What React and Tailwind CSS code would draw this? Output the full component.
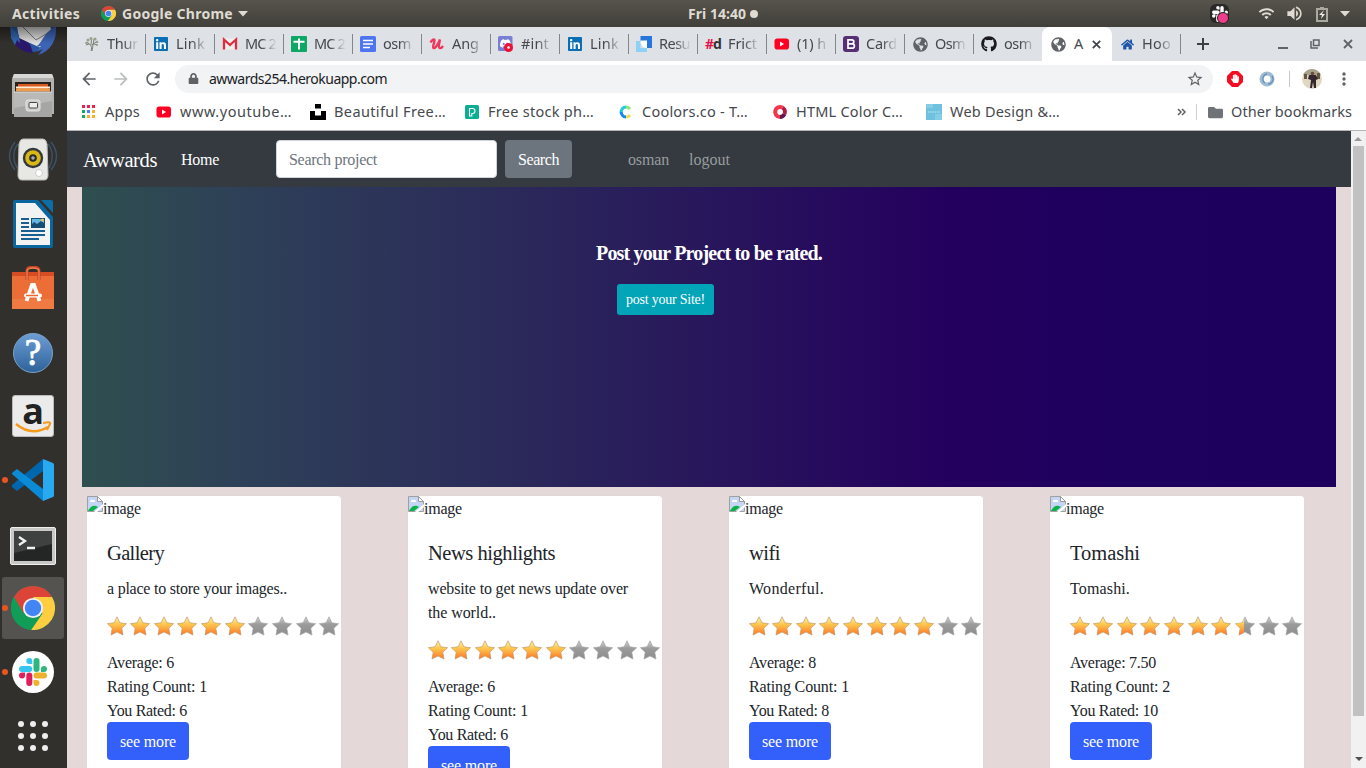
import React, { useLayoutEffect, useRef } from 'react';
import { FaLinkedin, FaGithub, FaGlobeAmericas, FaHome, FaFolder, FaHandPaper, FaLock, FaDiscord } from 'react-icons/fa';
import { MdRefresh, MdArrowBack, MdArrowForward, MdStarBorder, MdWifi, MdVolumeUp, MdMoreVert } from 'react-icons/md';

// Text that spreads its letters so that it fills a given width.
function Fit({ w, className = '', children }) {
  const ref = useRef(null);
  useLayoutEffect(() => {
    const el = ref.current;
    el.style.letterSpacing = '0px';
    const natural = el.getBoundingClientRect().width;
    el.style.letterSpacing = `${(w - natural) / String(children).length}px`;
  }, [w, children]);
  return (
    <span ref={ref} className={`inline-block whitespace-pre ${className}`}>
      {children}
    </span>
  );
}

function ChromeLogo({ size }) {
  return (
    <svg width={size} height={size} viewBox="0 0 48 48" className="shrink-0">
      <circle cx="24" cy="24" r="24" fill="#0f9d58" />
      <path d="M24 0a24 24 0 0 1 20.8 12H24A12 12 0 0 0 13.6 18L3.2 12A24 24 0 0 1 24 0z" fill="#db4437" />
      <path d="M3.2 12 13.6 30 24 12z" fill="#db4437" />
      <path d="M3.2 12 13.6 30 24 36 22 48A24 24 0 0 1 3.2 12z" fill="#0f9d58" />
      <path d="M24 12h20.8A24 24 0 0 1 22 48L34.4 30z" fill="#ffcd40" />
      <circle cx="24" cy="24" r="11" fill="#f1f1f1" />
      <circle cx="24" cy="24" r="9" fill="#4285f4" />
    </svg>
  );
}

function SlackMark({ size, mono }) {
  const c = mono ? ['#fff', '#fff', '#fff', '#fff'] : ['#36c5f0', '#2eb67d', '#ecb22e', '#e01e5a'];
  return (
    <svg width={size} height={size} viewBox="0 0 28 28">
      <path fill={c[0]} d="M10.3 0a3 3 0 1 0 0 6h3V3a3 3 0 0 0-3-3zM10.3 8H3a3 3 0 1 0 0 6h7.300a3 3 0 0 0 0-6z" />
      <path fill={c[1]} d="M28 11a3 3 0 1 0-6 0v3h3a3 3 0 0 0 3-3zM20.500 11V3a3 3 0 1 0-6 0v8a3 3 0 0 0 6 0z" />
      <path fill={c[2]} d="M17.500 28a3 3 0 1 0 0-6h-3v3a3 3 0 0 0 3 3zM17.500 20.500H25a3 3 0 0 0 0-6h-7.500a3 3 0 0 0 0 6z" />
      <path fill={c[3]} d="M0 17.500a3 3 0 1 0 6 0v-3H3a3 3 0 0 0-3 3zM7.300 17.500V25a3 3 0 1 0 6 0v-7.500a3 3 0 0 0-6 0z" />
    </svg>
  );
}

const YouTube = () => (
  <svg width="16" height="16" viewBox="0 0 16 16"><rect x="0.500" y="2.500" width="14.500" height="11" rx="2.800" fill="#ff0022" /><path d="M6 5.500v5L10 8z" fill="#fff" /></svg>
);
const LinkedIn = () => (
  <svg width="16" height="16" viewBox="0 0 16 16"><rect x="2" y="2" width="12" height="12" fill="#fff" /><FaLinkedin size={16} color="#0a6eb4" /></svg>
);
const Globe = () => <FaGlobeAmericas size={15} color="#5f6368" />;

const tabs = [
  ['Thur', 31, <svg width="16" height="16" viewBox="0 0 16 16"><path d="M7 15c1-3 .5-4-.5-6L3 6m4 3 .5-6M8 9l4-3m-4 9 1-6 1-6M5 8 2 9m8-1 4 1" stroke="#6f7564" strokeWidth="0.900" fill="none" /><g fill="#98a08e"><circle cx="4" cy="4" r="1.500" /><circle cx="7" cy="2.500" r="1.500" /><circle cx="11" cy="3" r="1.600" /><circle cx="13" cy="6" r="1.300" /><circle cx="2.500" cy="7" r="1.300" /><circle cx="12.500" cy="9" r="1" /></g></svg>],
  ['Link', 29, <LinkedIn />],
  ['MC 2', 31, <svg width="16" height="16" viewBox="0 0 16 16"><path d="M1 2.500h14v11H1z" fill="#f1eeee" /><path d="M2 13.500V3.500L8 9l6-5.500v10" fill="none" stroke="#dc2f3e" strokeWidth="2.300" /></svg>],
  ['MC 2', 31, <svg width="16" height="16" viewBox="0 0 16 16"><rect width="16" height="16" rx="1" fill="#0fa765" /><path d="M8 2.500v11M2.500 5.800h11" stroke="#fff" strokeWidth="2" /></svg>],
  ['osm', 28, <svg width="16" height="16" viewBox="0 0 16 16"><rect width="16" height="16" rx="1.500" fill="#4f74f0" /><path d="M3 4.500h10M3 8h10M3 11.500h7" stroke="#fff" strokeWidth="1.700" /></svg>],
  ['Ang', 27, <svg width="16" height="16" viewBox="0 0 16 16"><path d="M1.500 6.500C3 4 5 2.500 5.500 4S3 11 4.500 12 9.500 8 11 3.500C10 8 9.300 11.500 10.600 12S13 11.500 14 10" stroke="#f0365b" strokeWidth="2.400" fill="none" /></svg>],
  ['#int', 28, <svg width="16" height="16" viewBox="0 0 16 16"><rect width="14.500" height="15" rx="1.500" fill="#7980d3" /><g transform="translate(1.500 1.500)"><FaDiscord size={12} color="#fff" /></g><circle cx="10.500" cy="11.500" r="4.500" fill="#ee1133" /><circle cx="10.500" cy="11.500" r="1.300" fill="#fff" /></svg>],
  ['Link', 29, <LinkedIn />],
  ['Resu', 31, <svg width="16" height="16" viewBox="0 0 16 16"><path d="M4.500 0H16v12h-5L4.500 5z" fill="#2776dc" /><path d="M0 5h4.500v7H11v4H0z" fill="#8fd0f5" /><path d="M4.500 4.500H11V12C7 12 4.500 9 4.500 4.500z" fill="#fff" /></svg>],
  ['Frict', 29, <span className="font-['Noto_Sans',sans-serif] text-[14px] leading-4 font-bold tracking-[-1px] text-[#333]"><span className="text-[#e5134f]">#</span>d</span>],
  ['(1) h', 29, <YouTube />],
  ['Card', 31, <svg width="16" height="16" viewBox="0 0 16 16"><rect width="16" height="16" rx="3" fill="#563073" /><path d="M5 3.800h3.800a2 2 0 0 1 0 4H5zm0 4h4.200a2.200 2.200 0 0 1 0 4.400H5z" fill="none" stroke="#fff" strokeWidth="1.700" /></svg>],
  ['Osm', 30, <Globe />],
  ['osm', 28, <FaGithub size={16} color="#1b1b1f" />],
];

function Tab({ label, icon, line, w }) {
  return (
    <div className="flex h-[34px] w-[69px] shrink-0 items-center pl-[7px]">
      <span className="flex size-4 shrink-0 items-center justify-center">{icon}</span>
      <span className="ml-[7px] w-8 shrink-0 [mask-image:linear-gradient(to_right,black_50%,transparent)] text-[14.500px] text-[#45494d]"><Fit w={w}>{label}</Fit></span>
      {line && <span className="ml-auto h-[20px] w-px bg-[#83878d]" />}
    </div>
  );
}

function Bookmark({ icon, label, w, span }) {
  return (
    <div className="flex shrink-0 items-center" style={{ width: span }}>
      <span className="flex size-4 shrink-0 items-center justify-center">{icon}</span>
      <Fit w={w} className="ml-2">{label}</Fit>
    </div>
  );
}

const bookmarks = [
  ['Apps', 35, 75, <svg width="14" height="14" viewBox="0 0 14 14">{['#e8244c', '#e8244c', '#e8244c', '#16a765', '#4285f4', '#f3b32d', '#16a765', '#f3b32d', '#f3b32d'].map((c, i) => <rect key={i} x={(i % 3) * 5} y={Math.floor(i / 3) * 5} width="3" height="3" fill={c} />)}</svg>],
  ['www.youtube…', 112, 154, <YouTube />],
  ['Beautiful Free…', 112, 154, <svg width="16" height="16" viewBox="0 0 16 16"><path d="M5 0h6v4.500H5zM0 7h5v4.500h6V7h5v9H0z" fill="#000" /></svg>],
  ['Free stock ph…', 106, 154, <svg width="14" height="14" viewBox="0 0 14 14"><rect width="14" height="14" rx="1.500" fill="#0aae94" /><path d="M4.500 3.500h3a2.200 2.200 0 0 1 0 5H6.800v2.500H4.500z" fill="none" stroke="#fff" strokeWidth="1.100" /></svg>],
  ['Coolors.co - T…', 106, 154, <svg width="14" height="14" viewBox="0 0 14 14" fill="none" strokeWidth="3.200"><path d="M7 2A5 5 0 0 0 2.200 7" stroke="#20c9df" /><path d="M2.200 7A5 5 0 0 0 7 12" stroke="#1688f0" /><path d="M7 2a5 5 0 0 1 4 2" stroke="#8be86f" /><path d="M7 12a5 5 0 0 0 4-2" stroke="#f1dc58" /></svg>],
  ['HTML Color C…', 107, 154, <svg width="16" height="16" viewBox="0 0 16 16" fill="none" strokeWidth="4"><path d="M8 13A5 5 0 1 1 10.500 3.600" stroke="#f2374b" /><path d="M10.500 3.600A5 5 0 0 1 12.500 10" stroke="#b51945" /><path d="M12.500 10A5 5 0 0 1 8 13" stroke="#64164e" /></svg>],
  ['Web Design &…', 110, 0, <svg width="16" height="16" viewBox="0 0 16 16"><rect width="16" height="16" fill="#6fc2df" /><path d="M0 0h7v4H0zM9 10h7v6H9z" fill="#85cde4" /><path d="M2 8h12" stroke="#a5dbea" strokeDasharray="1.500 .7" strokeWidth="1.300" /></svg>],
];

const dock = [
  <svg width="50" height="52" viewBox="0 0 50 52"><circle cx="25" cy="24" r="22" fill="#29569f" /><path d="M2 24c1 15 12 23 23 23l-3-9z" fill="#2b176a" /><path d="m8 14 31-4 4 13-10 19-22-10z" fill="#dcdcdc" /><path d="m15 21 13 13 15-9" stroke="#777" fill="none" /><path d="M48 20c1 14-5 25-18 29l5-6-6 2 4-5-5 1c8-6 6-13 20-21z" fill="#3c63b4" /><path d="m2 20 1 12 4 7 2-5 3 3-1-8z" fill="#3467ae" /></svg>,
  <svg width="42" height="44" viewBox="0 0 42 44"><path d="M2 0h38l2 5v35H0V5z" fill="#b2b2b0" /><path d="M2 0h38l1.500 4H.5z" fill="#d7d7d5" /><path d="M3 8h36v11H3z" fill="#2a211d" /><path d="M6 10h30v7H6z" fill="#d85b20" /><path d="M4 12.500h34v2H4z" fill="#fff0d5" /><path d="M4 14.500h34v3H4z" fill="#f09a4b" /><path d="M2 18h38v25H2z" fill="#a6a6a4" /><path d="M2 18h38v9L2 34z" fill="#b9b9b7" /><path d="M2 18h38" stroke="#ddd" /><rect x="14" y="26" width="14" height="11" rx="2" fill="#cfcfce" stroke="#e4e4e3" /><rect x="17" y="28.500" width="8.500" height="5.500" rx="1" fill="#eee" stroke="#464646" /></svg>,
  <svg width="50" height="46" viewBox="0 0 50 46"><g stroke="#3d5166" fill="none" strokeWidth="1.500"><path d="M7 5c-7 9-7 19 0 28M10 7C4 14 5 24 9 31M43 5c7 9 7 19 0 28M40 7c6 7 5 17 1 24" /></g><path d="M15 2h20q3 0 4 5l1 31q0 5-4 5H14q-4 0-4-5l1-31q1-5 4-5z" fill="#e7e7e4" stroke="#bbb" /><circle cx="25" cy="21" r="10.200" fill="#34383a" /><circle cx="25" cy="21" r="7.800" fill="#d8b817" /><circle cx="25" cy="21" r="3.800" fill="#25292c" /><circle cx="25" cy="21" r="1.800" fill="#aaa" /><circle cx="31" cy="36" r="3.500" fill="#fff" stroke="#ccc" /></svg>,
  <svg width="40" height="48" viewBox="0 0 40 48"><path d="M2 0h23l15 17v29q0 2-2 2H2q-2 0-2-2V2q0-2 2-2z" fill="#0b659f" /><path d="M3 3h19l15 17v25H3z" fill="#f2f2f2" /><path d="M28 0h10q2 0 2 2v11z" fill="#0d6da8" /><path d="M8 19h8M8 23h8M8 27h8M8 31h24M8 35h24M8 39h18" stroke="#185f92" strokeWidth="2" /><rect x="18" y="18" width="14" height="10" fill="#164d72" /><path d="M19 19h12v4l-3-2-4 3-3-2-2 2z" fill="#63b5e2" /><circle cx="29.500" cy="20" r="1.500" fill="#f3bd48" /></svg>,
  <svg width="42" height="44" viewBox="0 0 42 44"><path d="M0 6h42v37H0z" fill="#ed6d36" /><path d="M0 6h42v4H0z" fill="#d74c23" /><path d="M0 33h42v10H0z" fill="#ef7a42" /><path d="M15 14V5q0-4 6-4t6 4v9" fill="none" stroke="#c44325" strokeWidth="3" /><path d="M15 14V5q0-3 6-3t6 3v9" fill="none" stroke="#f08052" strokeWidth="1.300" /><path d="m14.500 35 5.500-16h2l5.500 16" fill="none" stroke="#fff" strokeWidth="3.800" /><rect x="12" y="27.500" width="18" height="4" rx="2" fill="#fff" /><path d="M14 29.500h12" stroke="#ec672f" strokeWidth="1.500" /></svg>,
  <svg width="42" height="42" viewBox="0 0 42 42" className="mt-0.5"><defs><linearGradient id="help" x1="0" y1="0" x2="0" y2="1"><stop stopColor="#6d9dd4" /><stop offset="1" stopColor="#2d6299" /></linearGradient></defs><circle cx="21" cy="21" r="19.500" fill="url(#help)" stroke="#79a2c9" /><text x="21" y="33" textAnchor="middle" fontSize="37" fontFamily="Liberation Serif, serif" fill="#fff" stroke="#fff" strokeWidth=".9">?</text></svg>,
  <span className="relative flex size-[42px] items-start justify-center rounded-[3px] border border-[#bbb] bg-[#ebebeb]"><span className="-mt-[2px] font-['Open_Sans',sans-serif] text-[36px] leading-[34px] font-bold text-[#222]">a</span><svg className="absolute bottom-0 left-0" width="40" height="17" viewBox="0 0 40 17"><path d="M3 5c11 9 22 9 32 3" fill="none" stroke="#f59a1a" strokeWidth="2.500" /><path d="M30 4c6-1 8-1 7 1l-3 6" fill="none" stroke="#f59a1a" strokeWidth="2" /></svg></span>,
  <svg width="42" height="42" viewBox="0 0 42 42"><path d="M31 0v12L5 32l-5-4v-2z" fill="#0066ad" /><path d="M5 10 31 30v12L0 15v-1z" fill="#0b8bd5" /><path d="m31 0 10 4q1 1 1 2v30q0 2-1 2l-10 4V0z" fill="#29a9ef" /></svg>,
  <svg width="46" height="38" viewBox="0 0 46 38" className="mt-[3px]"><rect x=".5" y=".5" width="45" height="37" rx="1.500" fill="#c8c8c6" stroke="#eee" /><rect x="4" y="4" width="38" height="30" fill="#242625" /><path d="M4 4h38v13L4 26z" fill="#3f4140" /><path d="m9 10 6 4-6 4M17 21h8" fill="none" stroke="#f2f2f2" strokeWidth="2.300" /></svg>,
  <ChromeLogo size={44} />,
  <span className="flex size-[42px] items-center justify-center rounded-full bg-white"><SlackMark size={28} /></span>,
  <svg width="32" height="32" viewBox="0 0 32 32" fill="#eee">{[0, 1, 2, 3, 4, 5, 6, 7, 8].map((i) => <circle key={i} cx={4 + (i % 3) * 12} cy={4 + Math.floor(i / 3) * 12} r="3" />)}</svg>,
];

const starPath = 'M10 0.800 12.900 6.800 19.600 7.700 14.800 12.300 16 19 10 15.900 4 19 5.200 12.300 0.400 7.700 7.100 6.800Z';

function Stars({ value }) {
  return (
    <svg width="234" height="20" viewBox="0 0 234 20" className="block">
      <defs>
        <linearGradient id="gold" x1="0" y1="0" x2="0" y2="1"><stop stopColor="#fff6b0" /><stop offset=".4" stopColor="#fdc94f" /><stop offset="1" stopColor="#ff7427" /></linearGradient>
        <linearGradient id="grey" x1="0" y1="0" x2="0" y2="1"><stop stopColor="#d6d6d6" /><stop offset=".4" stopColor="#9c9c9c" /><stop offset="1" stopColor="#8c8c8c" /></linearGradient>
        <clipPath id="half"><rect width="9" height="20" /></clipPath>
      </defs>
      {[0, 1, 2, 3, 4, 5, 6, 7, 8, 9].map((i) => (
        <g key={i} transform={`translate(${Math.floor(i * 23.65)} 0)`}>
          <path d={starPath} fill={i + 1 <= value ? 'url(#gold)' : 'url(#grey)'} stroke={i + 1 <= value ? '#c09a66' : '#a5a5a5'} strokeWidth=".7" strokeLinejoin="round" />
          {i < value && i + 1 > value && <path d={starPath} fill="url(#gold)" clipPath="url(#half)" />}
        </g>
      ))}
    </svg>
  );
}

const cards = [
  { title: 'Gallery', tw: 57, text: [['a place to store your images..', 180]], avg: '6', aw: 67, count: 1, cw: 100, rated: 6, rw: 80, value: 6 },
  { title: 'News highlights', tw: 127, text: [['website to get news update over', 200], ['the world..', 68]], avg: '6', aw: 67, count: 1, cw: 100, rated: 6, rw: 80, value: 6 },
  { title: 'wifi', tw: 31, text: [['Wonderful.', 75]], avg: '8', aw: 67, count: 1, cw: 100, rated: 8, rw: 80, value: 8 },
  { title: 'Tomashi', tw: 70, text: [['Tomashi.', 60]], avg: '7.50', aw: 86, count: 2, cw: 100, rated: 10, rw: 88, value: 7.5 },
];

function Card({ c }) {
  return (
    <div className="h-[320px] w-[256px] shrink-0 rounded-[4px] border border-[#dfd8d8] bg-white">
      <div className="flex h-6">
        <svg width="16" height="16" viewBox="0 0 16 16" className="shrink-0">
          <path d="M.5.500h10l5 5v10H.5z" fill="#c4d5f5" stroke="#a0a0a0" />
          <path d="M3 5q1-2 3-1 2-1 2 2H3z" fill="#fff" />
          <path d="M1 15q4-8 10-4l-5 4z" fill="#0db14b" />
          <path d="m16 8-9 8h3l6-5z" fill="#fff" /><path d="M10.500.500v5h5z" fill="#fff" stroke="#999" />
        </svg>
        <Fit w={38} className="pt-px">image</Fit>
      </div>
      <div className="p-5">
        <h5 className="mb-3 h-6 pt-px text-[20.500px] leading-6"><Fit w={c.tw}>{c.title}</Fit></h5>
        <div className="mb-4">{c.text.map(([t, w]) => <p key={t} className="h-6 pt-px"><Fit w={w}>{t}</Fit></p>)}</div>
        <div className="mb-3.5 h-5"><Stars value={c.value} /></div>
        <p className="h-6 pt-px"><Fit w={c.aw}>{`Average: ${c.avg}`}</Fit></p>
        <p className="h-6 pt-px"><Fit w={c.cw}>{`Rating Count: ${c.count}`}</Fit></p>
        <p className="h-6 pt-px"><Fit w={c.rw}>{`You Rated: ${c.rated}`}</Fit></p>
        <button className="flex h-[38px] w-[82px] items-center justify-center rounded-[4px] bg-[#335ffa] pt-px text-white"><Fit w={56}>see more</Fit></button>
      </div>
    </div>
  );
}

export default function App() {
  return (
    <div className="flex h-[768px] w-[1366px] flex-col overflow-hidden bg-[#32302c] font-['Noto_Sans',sans-serif]">
      <header className="z-10 flex h-[27px] shrink-0 items-center bg-linear-to-b from-[#57544c] to-[#403f3a] pl-3 text-[14px] font-bold text-[#dfdbd2]">
        <Fit w={68}>Activities</Fit>
        <span className="ml-5 flex w-4 shrink-0 justify-center"><ChromeLogo size={15} /></span>
        <Fit w={111} className="ml-1.5">Google Chrome</Fit>
        <svg width="10" height="6" className="ml-[5px]"><path d="M0 0h10L5 5.500z" fill="#dfdbd2" /></svg>
        <Fit w={58} className="ml-[440px]">Fri 14:40</Fit>
        <span className="ml-1 size-2 rounded-full bg-[#dfdbd2]" />
        <span className="relative ml-[452px] flex size-[19px] shrink-0 items-center justify-center rounded-[6px] bg-[#292826]">
          <SlackMark size={16} mono />
          <span className="absolute right-0 -bottom-px size-[12px] rounded-full border border-[#222] bg-[#ef3d8b]" />
        </span>
        <span className="ml-[29px]"><MdWifi size={17} /></span>
        <span className="ml-2.5"><MdVolumeUp size={19} /></span>
        <svg width="12" height="16" viewBox="0 0 12 16" className="ml-[12px]"><path d="M1 3h10v12H1zM4 2h4" fill="none" stroke="#aaa89f" strokeWidth="2" /><path d="M8 4 3 9h3l-1 4 4-5H6z" fill="#eee" /></svg>
        <svg width="10" height="6" className="ml-3"><path d="M0 0h10L5 5.500z" fill="#dfdbd2" /></svg>
      </header>
      <div className="flex min-h-0 flex-1">
        <nav className="-mt-[27px] flex w-[67px] shrink-0 flex-col">
          {dock.map((icon, i) => (
            <div key={i} className="relative flex h-16 shrink-0 items-center justify-center pr-px">
              {i === 9 && <span className="absolute inset-y-px left-[2px] w-[62px] rounded-[3px] bg-[#55534f]" />}
              {(i === 7 || i === 9 || i === 10) && <span className="absolute top-[29px] left-[2px] size-[6px] rounded-full bg-[#e95420]" />}
              <span className="relative flex">{icon}</span>
              {i === 0 && <span className="absolute inset-x-0 top-[27px] h-4 bg-linear-to-b from-black/45 to-transparent" />}
            </div>
          ))}
        </nav>
        <main className="flex min-w-0 flex-1 flex-col bg-white">
          <div className="flex h-[34px] shrink-0 items-center bg-[#dee1e6] pl-[10px]">
            {tabs.map(([label, w, icon], i) => <Tab key={i} label={label} w={w} icon={icon} line={i !== 13} />)}
            <div className="-ml-px flex h-[34px] w-[70px] shrink-0 items-center rounded-t-[8px] bg-white pl-2 text-[14.500px] text-[#45494d]">
              <span className="flex size-4 items-center justify-center"><Globe /></span>
              <span className="ml-2 w-[18px]">A</span>
              <svg width="9" height="9" viewBox="0 0 9 9"><path d="m.8.800 7.400 7.400m0-7.400L.8 8.200" stroke="#3f4347" strokeWidth="1.700" /></svg>
            </div>
            <Tab label="Hoo" w={29} icon={<FaHome size={13} color="#1d56a8" />} line />
            <svg width="12" height="12" viewBox="0 0 12 12" className="ml-4"><path d="M6 0v12M0 6h12" stroke="#3c4043" strokeWidth="2" /></svg>
            <svg width="10" height="12" viewBox="0 0 10 12" className="ml-[69px]"><path d="M0 10h10" stroke="#5f6368" strokeWidth="2" /></svg>
            <svg width="10" height="10" viewBox="0 0 10 10" className="ml-[22px]"><path d="M3.500 1h5.500v5.500H3.500zM1 2v7h7" fill="none" stroke="#5f6368" strokeWidth="1.500" /></svg>
            <svg width="10" height="10" viewBox="0 0 10 10" className="ml-[23px]"><path d="m1 1 8 8m0-8L1 9" stroke="#5f6368" strokeWidth="1.800" /></svg>
          </div>
          <div className="flex h-[35px] shrink-0 items-center pl-3 text-[#5f6368]">
            <MdArrowBack size={20} className="shrink-0" />
            <MdArrowForward size={20} className="ml-3 shrink-0 text-[#babcbe]" />
            <MdRefresh size={20} className="ml-3 shrink-0" />
            <div className="ml-3 flex h-7 w-[1038px] shrink-0 items-center rounded-full bg-[#f1f3f4] pl-[13px]">
              <FaLock size={11} />
              <Fit w={178} className="ml-2.5 text-[14px] text-[#202124]">awwards254.herokuapp.com</Fit>
              <MdStarBorder size={18} className="mr-[9px] ml-auto" />
            </div>
            <svg width="16" height="16" viewBox="0 0 16 16" className="ml-[14px]"><path d="M5 0h6l5 5v6l-5 5H5l-5-5V5z" fill="#f40d22" /><g transform="translate(3.500 3)"><FaHandPaper size={9} color="#fff" /></g></svg>
            <svg width="16" height="16" viewBox="0 0 16 16" className="ml-4"><circle cx="8" cy="8" r="5.500" fill="#fff" stroke="#9dbbd4" strokeWidth="4" /><path d="M8 3a5 5 0 0 0-2 9m3 1a5 5 0 0 0 4-8" stroke="#6b93b5" fill="none" strokeWidth="1.300" /></svg>
            <span className="ml-3.5 h-4 w-px bg-[#c5c8cc]" />
            <svg width="20" height="20" viewBox="0 0 20 20" className="ml-3 rounded-full"><rect width="20" height="20" fill="#dfd7c0" /><path d="M0 0h20v6H0z" fill="#a5a18b" /><path d="M2 5h3v5H2zM15 4h3v6h-3z" fill="#655743" /><path d="M7 6h7l2 4-2 1v8h-2l-1-6-1 6H8l1-8-3-1z" fill="#33262d" /><circle cx="10.500" cy="4.500" r="1.800" fill="#6b493e" /></svg>
            <MdMoreVert size={20} className="ml-3" />
          </div>
          <div className="flex h-[34px] shrink-0 items-center pb-0.5 pl-[14px] text-[14.500px] text-[#45494d]">
            {bookmarks.slice(0, 6).map(([l, w, s, ic]) => <Bookmark key={l} label={l} w={w} span={s} icon={ic} />)}
            <Bookmark label="Web Design &…" w={110} span={249} icon={bookmarks[6][3]} />
            <svg width="10" height="8" viewBox="0 0 10 8" className="ml-[2px]"><path d="m1 1 3 3-3 3m4-6 3 3-3 3" fill="none" stroke="#5f6368" strokeWidth="1.500" /></svg>
            <span className="mr-[11px] ml-[9px] h-4 w-px bg-[#cfd1d4]" />
            <FaFolder size={15} color="#6f7377" />
            <Fit w={121} className="ml-2">Other bookmarks</Fit>
          </div>
          <div className="flex min-h-0 flex-1 border-t border-[#b6b4b4]">
            <div className="flex w-[1284px] shrink-0 flex-col overflow-hidden bg-[#e4d8d8] font-['Liberation_Serif',serif] text-[16px] leading-6 text-[#212529]">
              <div className="flex h-14 shrink-0 items-center bg-[#343a40] pl-[16px] text-white">
                <Fit w={74} className="pt-px text-[20.500px]">Awwards</Fit>
                <Fit w={38} className="ml-6 pt-px">Home</Fit>
                <div className="ml-[57px] flex h-[38px] w-[221px] items-center rounded-[4px] border border-[#ced4da] bg-white pl-3 text-[#6c757d]"><Fit w={88} className="pt-px">Search project</Fit></div>
                <div className="ml-2 flex h-[38px] w-[67px] items-center justify-center rounded-[4px] bg-[#6c757d]"><Fit w={41} className="pt-px">Search</Fit></div>
                <Fit w={41} className="ml-14 pt-px text-[#999c9f]">osman</Fit>
                <Fit w={41} className="ml-5 pt-px text-[#999c9f]">logout</Fit>
              </div>
              <section className="mx-[15px] flex h-[300px] shrink-0 flex-col items-center bg-[linear-gradient(to_right,#2f4f4f_0%,#2e4058_13%,#2b2b5a_33%,#270f5c_56%,#24005e_69%,#1e005f_82%,#1d005e_100%)] pt-[54px] text-white">
                <h1 className="h-6 text-[20px] leading-6 font-bold"><Fit w={226}>Post your Project to be rated.</Fit></h1>
                <button className="mt-[19px] mr-[87px] flex h-[31px] w-[97px] items-center justify-center rounded-[3px] bg-[#02a4b8] text-[14px]"><Fit w={79}>post your Site!</Fit></button>
              </section>
              <section className="mt-2 flex min-h-0 flex-1 gap-[65px] overflow-hidden pl-[19px]">
                {cards.map((c) => <Card key={c.title} c={c} />)}
              </section>
            </div>
            <div className="flex flex-1 flex-col items-center bg-[#f1f1f1]">
              <svg width="9" height="5" viewBox="0 0 9 5" className="my-[5px] shrink-0"><path d="M0 5h8L4 1z" fill="#9a9a9a" /></svg>
              <div className="h-[570px] w-[11px] shrink-0 bg-[#c1c1c1]" />
              <svg width="8" height="5" viewBox="0 0 8 5" className="mt-auto mb-[6px]"><path d="M0 0h8L4 4z" fill="#505050" /></svg>
            </div>
          </div>
        </main>
      </div>
    </div>
  );
}
